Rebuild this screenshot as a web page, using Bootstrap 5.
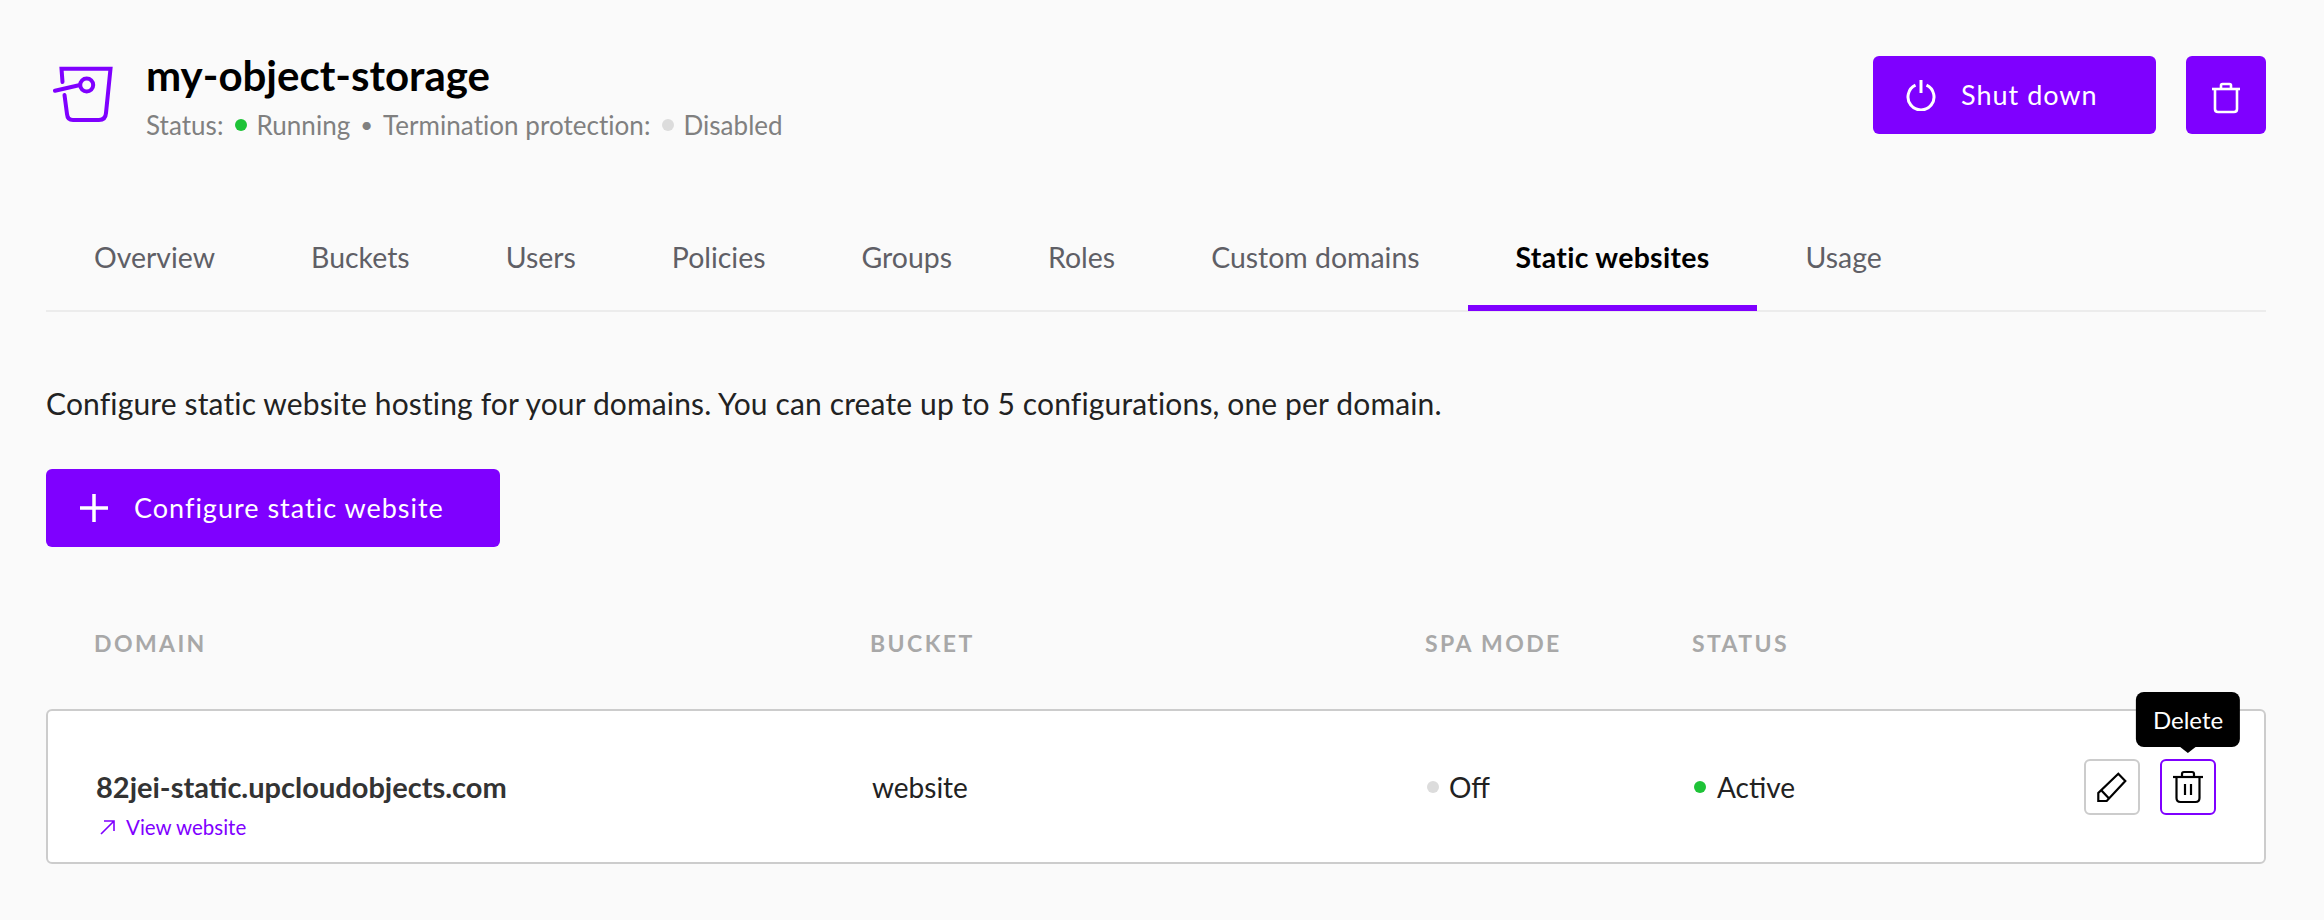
<!DOCTYPE html>
<html lang="en">
<head>
  <meta charset="UTF-8">
  <meta name="viewport" content="width=device-width, initial-scale=1">
  <title>my-object-storage - Static websites</title>
  <link rel="stylesheet" href="https://cdn.jsdelivr.net/npm/bootstrap@5.3.3/dist/css/bootstrap.min.css">
  <style>
    body {
      background-color: #fafafa;
      font-family: "Lato", "Liberation Sans", sans-serif;
      color: #000;
    }
    .page { padding: 56px 58px 0 46px; }
    .btn-brand {
      background-color: #7f00ff;
      border: 0;
      border-radius: 6px;
      color: #fff;
      height: 78px;
      font-size: 27px;
      letter-spacing: 1px;
    }
    .btn-brand:hover { background-color: #7f00ff; color: #fff; }
    .btn-shutdown { width: 283px; padding: 0 0 0 33px; gap: 25px; }
    .btn-remove { width: 80px; padding: 0; }
    .btn-configure { width: 454px; padding: 0 0 0 34px; gap: 26px; }
    .actions-top { gap: 30px; }
    .bucket-icon { margin: 9px 33px 0 7px; }
    .title { font-size: 42px; font-weight: 700; line-height: 48px; margin: -5px 0 0; }
    .meta { font-size: 26px; line-height: 32px; color: #808080; margin-top: 10px; letter-spacing: .04px; }
    .dot { width: 12px; height: 12px; }
    .dot-on { background-color: #1ec337; }
    .dot-off { background-color: #dcdcdc; }
    .meta .dot { margin: 0 9px 0 12px; }
    .meta .sep { margin: 0 10px; font-size: 22px; }
    .tabs { margin-top: 63px; border-bottom: 2px solid #ececec; height: 108px; }
    .tabs .nav-link {
      color: #5f5f66;
      font-size: 28.45px;
      padding: 0 48px;
      height: 106px;
      line-height: 106px;
    }
    .tabs .nav-link.active { color: #000; font-weight: 700; letter-spacing: .3px; border-bottom: 6px solid #7f00ff; height: 107px; }
    .intro { font-size: 30px; line-height: 40px; letter-spacing: .14px; margin: 71px 0 46px; color: #222; }
    .cols { display: grid; grid-template-columns: 776px 555px 267px 1fr auto; align-items: center; padding: 0 48px; }
    .col-head { font-size: 23px; font-weight: 700; letter-spacing: 2.4px; color: #a8a8a8; margin-top: 80px; height: 32px; line-height: 32px; }
    .site-row { margin-top: 50px; height: 155px; border: 2px solid #ccc; border-radius: 6px; background-color: #fff; font-size: 28px; color: #222; }
    .site-row .cols { height: 100%; }
    .status-off { gap: 10px; }
    .status-on { gap: 11px; }
    .domain { font-weight: 700; font-size: 29px; line-height: 36px; color: #333; margin-top: 37px; }
    .view-link { font-size: 20.5px; line-height: 28px; color: #7f00ff; text-decoration: none; gap: 11px; margin-top: 8px; padding-left: 4px; }
    .icon-btn { width: 56px; height: 56px; padding: 0; border: 2px solid #ccc; border-radius: 6px; background-color: #fff; }
    .icon-btn.focused { border-color: #7f00ff; }
    .actions { gap: 20px; }
    .tooltip.hint { position: absolute; bottom: 100%; left: 50%; transform: translateX(-50%); padding: 0 0 6px; margin: 0 0 6px; opacity: 1; }
    .hint .tooltip-inner { background-color: #000; font-size: 24px; line-height: 55px; padding: 0 17px; border-radius: 8px; max-width: none; font-family: "Lato", sans-serif; }
    .hint .tooltip-arrow { position: absolute; bottom: 0; left: 50%; margin-left: -9px; width: 18px; height: 6px; border-top: 7px solid #000; border-left: 9px solid transparent; border-right: 9px solid transparent; }
    .hint .tooltip-arrow::before { display: none; }
  </style>
</head>
<body>

<main class="page">
  <header class="d-flex justify-content-between align-items-start">
    <div class="d-flex align-items-start">
      <svg class="bucket-icon" width="60" height="60" viewBox="0 0 60 60" fill="none" stroke="#7f00ff" stroke-width="4" stroke-linecap="round">
        <path d="M9.5 17 8.5 3.7H57.5L53 48Q52.5 55 46 55H20Q14.5 55 14 49L11.5 30"/>
        <path d="M2 25.7 27 20"/>
        <circle cx="33.7" cy="20" r="6.5"/>
      </svg>
      <div>
        <h1 class="title">my-object-storage</h1>
        <div class="meta d-flex align-items-center">
          <span>Status:</span>
          <span class="dot dot-on rounded-circle"></span>
          <span>Running</span>
          <span class="sep">•</span>
          <span>Termination protection:</span>
          <span class="dot dot-off rounded-circle"></span>
          <span>Disabled</span>
        </div>
      </div>
    </div>
    <div class="actions-top d-flex">
      <button class="btn btn-brand btn-shutdown d-flex align-items-center" type="button">
        <svg width="30" height="32" viewBox="0 0 30 32" fill="none" stroke="#fff" stroke-width="3">
          <path d="M9.5 6.2a13 13 0 1 0 11 0"/>
          <path d="M15 1v13"/>
        </svg>
        Shut down
      </button>
      <button class="btn btn-brand btn-remove" type="button" aria-label="Delete">
        <svg width="32" height="34" viewBox="0 0 32 34" fill="none" stroke="#fff" stroke-width="2.6">
          <path d="M2 8H30"/>
          <path d="M11 8V4.5Q11 3 12.5 3H19.5Q21 3 21 4.5V8"/>
          <path d="M5 8V28Q5 31 8 31H24Q27 31 27 28V8"/>
        </svg>
      </button>
    </div>
  </header>

  <ul class="nav tabs">
    <li class="nav-item"><a class="nav-link" href="#">Overview</a></li>
    <li class="nav-item"><a class="nav-link" href="#">Buckets</a></li>
    <li class="nav-item"><a class="nav-link" href="#">Users</a></li>
    <li class="nav-item"><a class="nav-link" href="#">Policies</a></li>
    <li class="nav-item"><a class="nav-link" href="#">Groups</a></li>
    <li class="nav-item"><a class="nav-link" href="#">Roles</a></li>
    <li class="nav-item"><a class="nav-link" href="#">Custom domains</a></li>
    <li class="nav-item"><a class="nav-link active" href="#">Static websites</a></li>
    <li class="nav-item"><a class="nav-link" href="#">Usage</a></li>
  </ul>

  <p class="intro">Configure static website hosting for your domains. You can create up to 5 configurations, one per domain.</p>

  <button class="btn btn-brand btn-configure d-flex align-items-center" type="button">
    <svg width="28" height="28" viewBox="0 0 28 28" stroke="#fff" stroke-width="3.5">
      <path d="M0 14H28M14 0V28"/>
    </svg>
    Configure static website
  </button>

  <div class="cols col-head">
    <div>DOMAIN</div>
    <div>BUCKET</div>
    <div>SPA MODE</div>
    <div>STATUS</div>
  </div>

  <div class="site-row">
    <div class="cols">
      <div>
        <div class="domain">82jei-static.upcloudobjects.com</div>
        <a class="view-link d-flex align-items-center" href="#">
          <svg width="15" height="15" viewBox="0 0 15 15" fill="none" stroke="#7f00ff" stroke-width="1.6">
            <path d="M1 14 14 1M4 1H14V11"/>
          </svg>
          View website
        </a>
      </div>
      <div>website</div>
      <div class="status-off d-flex align-items-center"><span class="dot dot-off rounded-circle"></span>Off</div>
      <div class="status-on d-flex align-items-center"><span class="dot dot-on rounded-circle"></span>Active</div>
      <div class="actions d-flex">
        <button class="btn icon-btn" type="button" aria-label="Edit">
          <svg width="32" height="32" viewBox="0 0 32 32" fill="none" stroke="#000" stroke-width="2.2">
            <path d="M2.3 30V22L22.3 2.7 29.3 10 10.7 30Z"/>
            <path d="M5.5 19.5 13 27.5"/>
          </svg>
        </button>
        <div class="position-relative">
          <button class="btn icon-btn focused" type="button" aria-label="Delete">
            <svg width="32" height="34" viewBox="0 0 32 34" fill="none" stroke="#000" stroke-width="2.2">
              <path d="M1 7H31"/>
              <path d="M10 7V4Q10 2 12 2H20Q22 2 22 4V7"/>
              <path d="M4.5 7V28Q4.5 32 8.5 32H23.5Q27.5 32 27.5 28V7"/>
              <path d="M13 14V25M19 14V25"/>
            </svg>
          </button>
          <div class="tooltip bs-tooltip-top hint show" role="tooltip">
            <div class="tooltip-arrow"></div>
            <div class="tooltip-inner">Delete</div>
          </div>
        </div>
      </div>
    </div>
  </div>
</main>

<script src="https://cdn.jsdelivr.net/npm/bootstrap@5.3.3/dist/js/bootstrap.bundle.min.js"></script>
</body>
</html>
